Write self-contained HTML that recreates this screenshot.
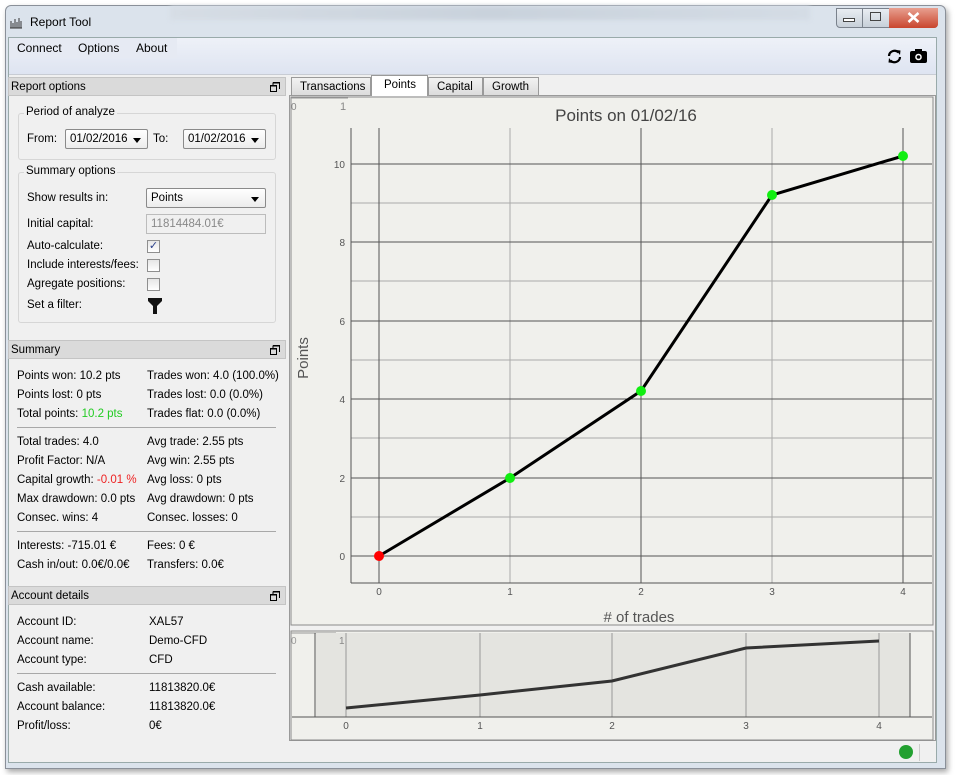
<!DOCTYPE html>
<html><head><meta charset="utf-8"><style>
*{margin:0;padding:0;box-sizing:border-box}
body{width:955px;height:775px;background:#fff;position:relative;overflow:hidden;font-family:"Liberation Sans",sans-serif;font-size:11.5px;color:#000}
.a{position:absolute;white-space:nowrap}
.dock{position:absolute;left:8px;width:278px;height:19px;background:#dadada;border:1px solid #c4c4c4;padding:3px 2px;font-size:11.5px}
.dock svg{position:absolute;right:5px;top:4px}
.grp{position:absolute;border:1px solid #d6d6d6;border-radius:3px}
.gt{position:absolute;background:#f0f0f0;padding:0 2px}
.cb{position:absolute;width:13px;height:13px;border:1px solid #8f8f8f;background:linear-gradient(#e6e6e6,#fff)}
.combo{position:absolute;height:20px;border:1px solid #8a8a8a;border-radius:2px;background:linear-gradient(#fff,#ececec);padding:3px 4px}
.combo:after{content:"";position:absolute;right:6px;top:8px;border:4px solid transparent;border-top:5px solid #000}
.tab{position:absolute;top:77px;height:19px;border:1px solid #9a9a9a;background:linear-gradient(#f2f2f2,#dcdcdc);padding:3px 8px}
hr.s{position:absolute;left:17px;width:259px;border:0;border-top:1px solid #a8a8a8}
</style></head><body>
<div class="a" style="left:5px;top:5px;width:941px;height:764px;background:#dbe3ec;border:1px solid #8a9099;border-radius:6px 6px 0 0;box-shadow:2px 3px 6px rgba(0,0,0,.35)"></div>
<div class="a" style="left:170px;top:6px;width:640px;height:14px;background:linear-gradient(90deg,#d6dde5,#c9d2dc,#d4dce5);filter:blur(2px)"></div>
<svg class="a" style="left:9px;top:15px" width="14" height="14"><path d="M1 13h12M2 13V6M4 13V8M6 13V4M8 13V7M10 13V3M12 13V6" stroke="#333" stroke-width="1"/></svg>
<div class="a" style="left:30px;top:15px;font-size:12px">Report Tool</div>
<div class="a" style="left:836px;top:8px;width:102px;height:20px;border:1px solid #7a828c;border-radius:0 0 4px 4px;background:linear-gradient(#e8edf2,#c8d0d9)"></div>
<div class="a" style="left:862px;top:8px;width:1px;height:20px;background:#7a828c"></div>
<div class="a" style="left:889px;top:8px;width:49px;height:20px;background:linear-gradient(#e8a090,#c9452e);border-radius:0 0 4px 0"></div>
<svg class="a" style="left:907px;top:12px" width="13" height="11"><path d="M1.5 1l10 9M11.5 1l-10 9" stroke="#fff" stroke-width="2.6"/></svg>
<div class="a" style="left:843px;top:18px;width:12px;height:4px;border:1px solid #444;background:#fff"></div>
<div class="a" style="left:870px;top:12px;width:11px;height:9px;border:1px solid #444"></div>
<div class="a" style="left:8px;top:37px;width:929px;height:726px;background:#f0f0f0;border:1px solid #9aa"></div>
<div class="a" style="left:9px;top:38px;width:927px;height:37px;background:linear-gradient(#eef1f8,#dee4f1);border-bottom:1px solid #c8ccd4"></div>
<div class="a" style="left:9px;top:38px;width:168px;height:20px;background:#e6eaf3"></div>
<div class="a" style="left:17px;top:41px;font-size:12px">Connect</div>
<div class="a" style="left:78px;top:41px;font-size:12px">Options</div>
<div class="a" style="left:136px;top:41px;font-size:12px">About</div>
<svg class="a" style="left:886px;top:48px" width="17" height="17" viewBox="0 0 17 17"><path d="M3 8a5.5 5.5 0 0 1 9.5-3.5M14 9a5.5 5.5 0 0 1-9.5 3.5" stroke="#000" stroke-width="2.2" fill="none"/><path d="M10 2l4.5 0.5-.5 4.5zM7 15l-4.5-.5.5-4.5z" fill="#000"/></svg>
<svg class="a" style="left:909px;top:48px" width="19" height="16"><rect x="1" y="3" width="17" height="12" rx="2" fill="#000"/><rect x="6" y="1" width="7" height="4" fill="#000"/><circle cx="9.5" cy="9" r="3.3" fill="#fff"/><circle cx="9.5" cy="9" r="1.8" fill="#000"/></svg>

<div class="dock" style="top:77px">Report options<svg width="10" height="10"><path d="M3 .5h6.5V7M3 .5V3M.5 3.5h6v6h-6z" stroke="#000" fill="none"/><path d="M3 1h6.5M.5 4h6" stroke="#000"/></svg></div>
<div class="grp" style="left:18px;top:113px;width:258px;height:47px"></div>
<div class="gt a" style="left:24px;top:106px">Period of analyze</div>
<div class="a" style="left:27px;top:133px">From:</div>
<div class="combo" style="left:65px;top:129px;width:83px">01/02/2016</div>
<div class="a" style="left:153px;top:133px">To:</div>
<div class="combo" style="left:183px;top:129px;width:83px">01/02/2016</div>
<div class="grp" style="left:18px;top:172px;width:258px;height:151px"></div>
<div class="gt a" style="left:24px;top:165px">Summary options</div>
<div class="a" style="left:27px;top:192px">Show results in:</div>
<div class="combo" style="left:146px;top:188px;width:120px">Points</div>
<div class="a" style="left:27px;top:218px">Initial capital:</div>
<div class="a" style="left:146px;top:214px;width:120px;height:20px;border:1px solid #bcbcbc;background:#f0f0f0;color:#888;padding:3px 4px">11814484.01€</div>
<div class="a" style="left:27px;top:240px">Auto-calculate:</div>
<div class="cb" style="left:147px;top:240px;color:#2a3f8a;font-size:11px;line-height:11px;text-align:center">✓</div>
<div class="a" style="left:27px;top:259px">Include interests/fees:</div>
<div class="cb" style="left:147px;top:259px"></div>
<div class="a" style="left:27px;top:278px">Agregate positions:</div>
<div class="cb" style="left:147px;top:278px"></div>
<div class="a" style="left:27px;top:299px">Set a filter:</div>
<svg class="a" style="left:148px;top:298px" width="14" height="16"><path d="M0 0h14v3L9 8v8H5V8L0 3z" fill="#111"/></svg>

<div class="dock" style="top:340px">Summary<svg width="10" height="10"><path d="M3 .5h6.5V7M3 .5V3M.5 3.5h6v6h-6z" stroke="#000" fill="none"/><path d="M3 1h6.5M.5 4h6" stroke="#000"/></svg></div>
<div class="a" style="left:17px;top:370px">Points won: 10.2 pts</div>
<div class="a" style="left:147px;top:370px">Trades won: 4.0 (100.0%)</div>
<div class="a" style="left:17px;top:389px">Points lost: 0 pts</div>
<div class="a" style="left:147px;top:389px">Trades lost: 0.0 (0.0%)</div>
<div class="a" style="left:17px;top:408px">Total points: <span style="color:#22cc22">10.2 pts</span></div>
<div class="a" style="left:147px;top:408px">Trades flat: 0.0 (0.0%)</div>
<hr class="s" style="top:427px">
<div class="a" style="left:17px;top:436px">Total trades: 4.0</div>
<div class="a" style="left:147px;top:436px">Avg trade: 2.55 pts</div>
<div class="a" style="left:17px;top:455px">Profit Factor: N/A</div>
<div class="a" style="left:147px;top:455px">Avg win: 2.55 pts</div>
<div class="a" style="left:17px;top:474px">Capital growth: <span style="color:#ee2222">-0.01 %</span></div>
<div class="a" style="left:147px;top:474px">Avg loss: 0 pts</div>
<div class="a" style="left:17px;top:493px">Max drawdown: 0.0 pts</div>
<div class="a" style="left:147px;top:493px">Avg drawdown: 0 pts</div>
<div class="a" style="left:17px;top:512px">Consec. wins: 4</div>
<div class="a" style="left:147px;top:512px">Consec. losses: 0</div>
<hr class="s" style="top:531px">
<div class="a" style="left:17px;top:540px">Interests: -715.01 €</div>
<div class="a" style="left:147px;top:540px">Fees: 0 €</div>
<div class="a" style="left:17px;top:559px">Cash in/out: 0.0€/0.0€</div>
<div class="a" style="left:147px;top:559px">Transfers: 0.0€</div>

<div class="dock" style="top:586px">Account details<svg width="10" height="10"><path d="M3 .5h6.5V7M3 .5V3M.5 3.5h6v6h-6z" stroke="#000" fill="none"/><path d="M3 1h6.5M.5 4h6" stroke="#000"/></svg></div>
<div class="a" style="left:17px;top:616px">Account ID:</div><div class="a" style="left:149px;top:616px">XAL57</div>
<div class="a" style="left:17px;top:635px">Account name:</div><div class="a" style="left:149px;top:635px">Demo-CFD</div>
<div class="a" style="left:17px;top:654px">Account type:</div><div class="a" style="left:149px;top:654px">CFD</div>
<hr class="s" style="top:673px">
<div class="a" style="left:17px;top:682px">Cash available:</div><div class="a" style="left:149px;top:682px">11813820.0€</div>
<div class="a" style="left:17px;top:701px">Account balance:</div><div class="a" style="left:149px;top:701px">11813820.0€</div>
<div class="a" style="left:17px;top:720px">Profit/loss:</div><div class="a" style="left:149px;top:720px">0€</div>

<div class="a" style="left:289px;top:95px;width:647px;height:646px;border:1px solid #9a9a9a;background:#f0f0f0"></div>
<div class="tab" style="left:291px;width:80px">Transactions</div>
<div class="tab" style="left:371px;top:75px;height:21px;width:57px;background:#fff;border-bottom:none;padding-left:12px">Points</div>
<div class="tab" style="left:428px;width:55px">Capital</div>
<div class="tab" style="left:483px;width:56px">Growth</div>

<svg class="a" style="left:290px;top:96px" width="645" height="645" font-family="Liberation Sans,DejaVu Sans,sans-serif">
<rect x="1" y="1" width="642" height="528" fill="#f0f0ec" stroke="#8a8a8a"/>
<line x1="1" y1="2" x2="58" y2="2" stroke="#999"/>
<text x="1" y="14" font-size="10" fill="#888">0</text><text x="50" y="14" font-size="11" fill="#888">1</text>
<text x="336" y="25" font-size="17" fill="#444" text-anchor="middle">Points on 01/02/16</text>
<g stroke="#aaa" stroke-width="1">
<line x1="61" y1="421" x2="642" y2="421"/><line x1="61" y1="342" x2="642" y2="342"/><line x1="61" y1="264" x2="642" y2="264"/><line x1="61" y1="185" x2="642" y2="185"/><line x1="61" y1="107" x2="642" y2="107"/>
<line x1="220" y1="32" x2="220" y2="487"/><line x1="482" y1="32" x2="482" y2="487"/>
</g>
<g stroke="#555" stroke-width="1">
<line x1="61" y1="460" x2="642" y2="460"/><line x1="61" y1="382" x2="642" y2="382"/><line x1="61" y1="303" x2="642" y2="303"/><line x1="61" y1="225" x2="642" y2="225"/><line x1="61" y1="146" x2="642" y2="146"/><line x1="61" y1="68" x2="642" y2="68"/>
<line x1="89" y1="32" x2="89" y2="487"/><line x1="351" y1="32" x2="351" y2="487"/><line x1="613" y1="32" x2="613" y2="487"/>
<line x1="61" y1="32" x2="61" y2="487"/><line x1="61" y1="487" x2="642" y2="487"/>
</g>
<g font-size="10" fill="#555" text-anchor="end">
<text x="55" y="464">0</text><text x="55" y="386">2</text><text x="55" y="307">4</text><text x="55" y="229">6</text><text x="55" y="150">8</text><text x="55" y="72">10</text>
</g>
<g font-size="10" fill="#555" text-anchor="middle">
<text x="89" y="499">0</text><text x="220" y="499">1</text><text x="351" y="499">2</text><text x="482" y="499">3</text><text x="613" y="499">4</text>
</g>
<text x="349" y="526" font-size="15" fill="#555" text-anchor="middle"># of trades</text>
<text transform="translate(18,262) rotate(-90)" font-size="15" fill="#555" text-anchor="middle">Points</text>
<polyline points="89,460 220,382 351,295 482,99 613,60" fill="none" stroke="#000" stroke-width="3"/>
<circle cx="89" cy="460" r="5" fill="#f00"/>
<circle cx="220" cy="382" r="5" fill="#1e1"/><circle cx="351" cy="295" r="5" fill="#1e1"/><circle cx="482" cy="99" r="5" fill="#1e1"/><circle cx="613" cy="60" r="5" fill="#1e1"/>
<rect x="1" y="535" width="642" height="109" fill="#f0f0ec" stroke="#8a8a8a"/>
<line x1="1" y1="537" x2="46" y2="537" stroke="#999"/>
<rect x="26" y="537" width="594" height="84" fill="#e4e4e0"/>
<line x1="25" y1="537" x2="25" y2="621" stroke="#555"/><line x1="620" y1="537" x2="620" y2="621" stroke="#555"/>
<g stroke="#999"><line x1="56" y1="537" x2="56" y2="621"/><line x1="190" y1="537" x2="190" y2="621"/><line x1="322" y1="537" x2="322" y2="621"/><line x1="456" y1="537" x2="456" y2="621"/><line x1="589" y1="537" x2="589" y2="621"/></g>
<line x1="2" y1="621" x2="642" y2="621" stroke="#555"/>
<text x="1" y="548" font-size="10" fill="#999">0</text><text x="49" y="548" font-size="10" fill="#888">1</text>
<polyline points="56,612 190,599 322,585 456,552 589,545" fill="none" stroke="#333" stroke-width="3"/>
<g font-size="10" fill="#555" text-anchor="middle"><text x="56" y="633">0</text><text x="190" y="633">1</text><text x="322" y="633">2</text><text x="456" y="633">3</text><text x="589" y="633">4</text></g>
</svg>
<div class="a" style="left:899px;top:745px;width:14px;height:14px;border-radius:50%;background:#22a030"></div>
<div class="a" style="left:919px;top:744px;width:1px;height:17px;background:#ccc"></div>
</body></html>
